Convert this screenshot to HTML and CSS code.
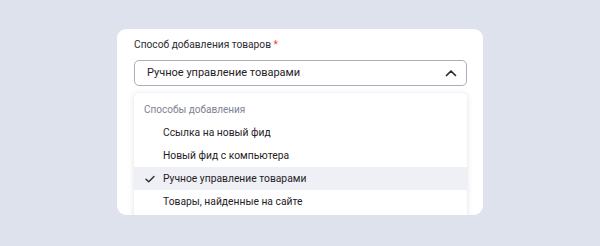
FILE: index.html
```html
<!DOCTYPE html>
<html lang="ru">
  <head>
    <meta charset="UTF-8" />
    <title>Способ добавления товаров</title>
    <link rel="stylesheet" href="styles.css">
  </head>
  <body>
    <div class="card">
      <label class="field-label">Способ добавления товаров <span class="req">*</span></label>
      <div class="select">
        <span>Ручное управление товарами</span>
        <svg class="chevron" width="12" height="8" viewBox="0 0 12 8">
          <path d="M1.5 6.5 L6 2 L10.5 6.5" fill="none" stroke="#2b2d33" stroke-width="1.7" stroke-linecap="round" stroke-linejoin="round"/>
        </svg>
      </div>
      <div class="menu">
        <div class="menu-group">Способы добавления</div>
        <div class="menu-item"><span class="tick"></span>Ссылка на новый фид</div>
        <div class="menu-item"><span class="tick"></span>Новый фид с компьютера</div>
        <div class="menu-item selected">
          <span class="tick">
            <svg width="10" height="8" viewBox="0 0 10 8"><path d="M1 4.2 L3.7 6.8 L9 1.4" fill="none" stroke="#2b2d33" stroke-width="1.4" stroke-linecap="round" stroke-linejoin="round"/></svg>
          </span>Ручное управление товарами</div>
        <div class="menu-item"><span class="tick"></span>Товары, найденные на сайте</div>
      </div>
    </div>
  </body>
</html>
```

FILE: styles.css
```css
* {
  margin: 0;
  padding: 0;
  box-sizing: border-box;
}

body {
  background-color: #dde2ed;
  font-family: Roboto, "Noto Sans", sans-serif;
  color: #1f2126;
  padding: 29px 0 0 117px;
  height: 246px;
  overflow: hidden;
}

.card {
  width: 366px;
  height: 186px;
  background-color: #fff;
  border-radius: 9px;
  padding: 8px 16px 0 17px;
  overflow: hidden;
}

.field-label {
  display: block;
  font-size: 10.2px;
  line-height: 16px;
  height: 23px;
  color: #2b2d33;
}

.req {
  color: #f5433a;
}

.select {
  height: 26px;
  border: 1px solid #a9aebb;
  border-radius: 5px;
  display: flex;
  align-items: center;
  justify-content: space-between;
  padding: 0 9px 1px 12px;
  font-size: 11px;
}

.menu {
  margin-top: 7px;
  background-color: #fff;
  border-radius: 4px;
  box-shadow: 0 1px 6px rgba(40, 50, 80, 0.12), 0 0 1px rgba(40, 50, 80, 0.15);
  padding-top: 6px;
  height: 140px;
}

.menu-group {
  height: 22px;
  line-height: 22px;
  padding-left: 10px;
  font-size: 10px;
  color: #7d8294;
}

.menu-item {
  height: 23px;
  display: flex;
  align-items: center;
  padding-left: 11px;
  font-size: 10.3px;
}

.menu-item.selected {
  background-color: #eef0f5;
}

.tick {
  width: 18px;
  display: flex;
  align-items: center;
}
```
